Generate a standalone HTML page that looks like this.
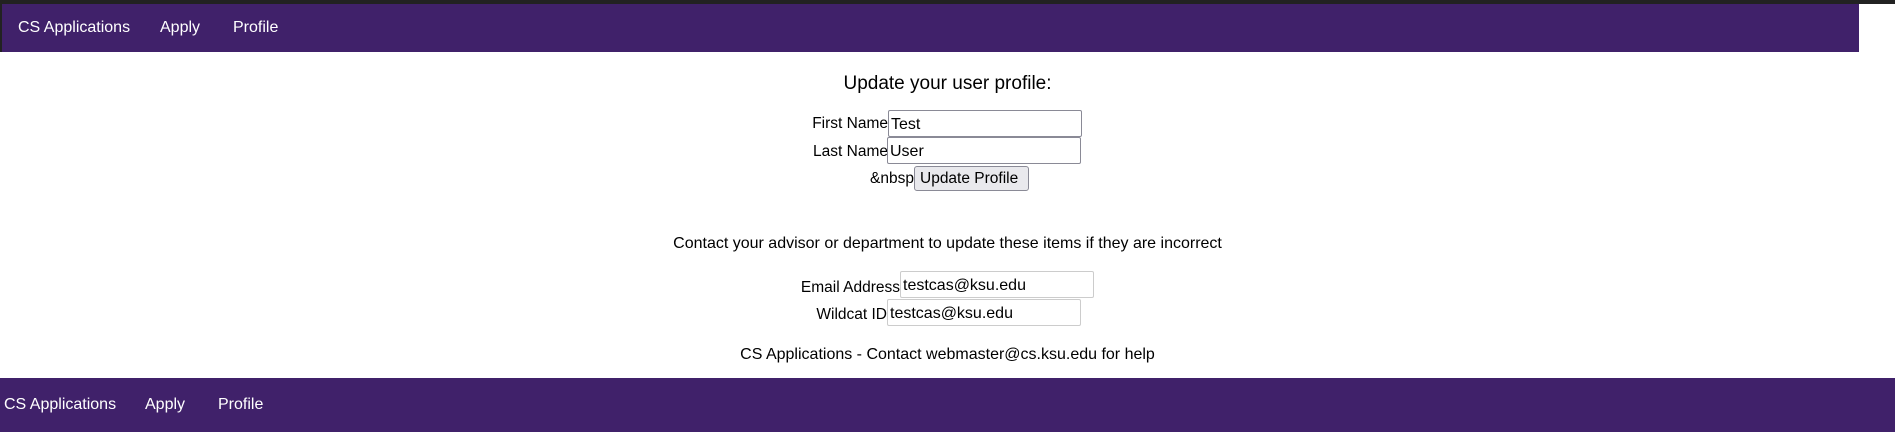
<!DOCTYPE html>
<html><head><meta charset="utf-8"><style>
body{margin:0;width:1895px;height:432px;position:relative;background:#fff;font-family:"Liberation Sans",sans-serif;color:#000;overflow:hidden}
.a{position:absolute;white-space:nowrap}
.nav{position:absolute;background:#40216a;color:#fff;font-size:16px}
.c{position:absolute;left:0;width:1895px;text-align:center;font-size:16px}
.inp{position:absolute;border:1px solid #8a8a96;border-radius:2px;box-sizing:border-box;font-size:16px;padding:5px 2px 0 2px;background:#fff}
.ro{border-color:#ccc}
.lbl{position:absolute;font-size:15.5px;text-align:right}
</style></head><body>
<div style="position:absolute;left:0;top:0;width:1895px;height:4px;background:#222"></div>
<div style="position:absolute;left:0;top:0;width:2px;height:52px;background:#222"></div>
<div class="nav" style="left:2px;top:4px;width:1857px;height:48px">
<span class="a" style="left:16px;top:15px">CS Applications</span>
<span class="a" style="left:158px;top:15px">Apply</span>
<span class="a" style="left:231px;top:15px">Profile</span>
</div>
<div class="c" style="top:73px;font-size:19px">Update your user profile:</div>
<div class="lbl" style="right:1007px;top:115px">First Name</div>
<div class="inp" style="left:888px;top:110px;width:194px;height:27px">Test</div>
<div class="lbl" style="right:1007px;top:143px">Last Name</div>
<div class="inp" style="left:887px;top:137px;width:194px;height:27px">User</div>
<div class="lbl" style="right:981px;top:170px">&amp;nbsp</div>
<div class="inp" style="left:914px;top:166px;width:115px;height:25px;background:#e9e9ed;border-radius:3px;padding:3px 5px;font-size:15.5px">Update Profile</div>
<div class="c" style="top:235px">Contact your advisor or department to update these items if they are incorrect</div>
<div class="lbl" style="right:995px;top:279px">Email Address</div>
<div class="inp ro" style="left:900px;top:271px;width:194px;height:27px">testcas@ksu.edu</div>
<div class="lbl" style="right:1008px;top:306px">Wildcat ID</div>
<div class="inp ro" style="left:887px;top:299px;width:194px;height:27px">testcas@ksu.edu</div>
<div class="c" style="top:346px">CS Applications - Contact webmaster@cs.ksu.edu for help</div>
<div class="nav" style="left:0;top:378px;width:1895px;height:54px">
<span class="a" style="left:4px;top:18px">CS Applications</span>
<span class="a" style="left:145px;top:18px">Apply</span>
<span class="a" style="left:218px;top:18px">Profile</span>
</div>
</body></html>
